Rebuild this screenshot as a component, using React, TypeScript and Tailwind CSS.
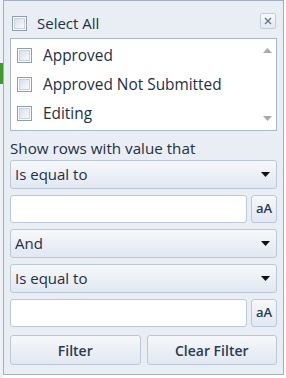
import React from 'react'

const font = { fontFamily: '"Open Sans", "Noto Sans", sans-serif' }

function Check() {
  return (
    <div className="w-[15px] h-[15px] border border-[#8f9db0] bg-white p-[1px] shrink-0">
      <div className="w-full h-full border border-[#c9d1dc] bg-gradient-to-br from-[#d9e0e9] to-[#f7f9fb]" />
    </div>
  )
}

function Arrow() {
  return (
    <svg width="9" height="5" viewBox="0 0 9 5" className="shrink-0">
      <path d="M0 0 H9 L4.5 5 Z" fill="#111" />
    </svg>
  )
}

function Dropdown({ label }: { label: string }) {
  return (
    <div className="h-[29px] flex items-center justify-between pl-[4px] pr-[6px] rounded-[3px] border border-[#bac8da] bg-gradient-to-b from-[#f6f8fb] to-[#e1e8f1] text-[15px] text-[#1f2f44]">
      <span>{label}</span>
      <Arrow />
    </div>
  )
}

function TextRow() {
  return (
    <div className="flex gap-[4px] h-[28px]">
      <div className="flex-1 rounded-[3px] border border-[#bac8da] bg-white" />
      <div className="w-[26px] rounded-[3px] border border-[#bac8da] bg-gradient-to-b from-[#f6f8fb] to-[#e1e8f1] flex items-center justify-center text-[13px] font-semibold text-[#2a3b51]">
        aA
      </div>
    </div>
  )
}

export default function App() {
  const items = ['Approved', 'Approved Not Submitted', 'Editing']
  return (
    <div className="w-[286px] h-[378px] flex bg-white overflow-hidden" style={font}>
      {/* strip of the grid behind the popup */}
      <div className="w-[3px] h-full flex flex-col bg-[#eef2f6]">
        <div className="h-[63px]" />
        <div className="h-[21px] bg-[#3f9a2e]" />
      </div>

      <div className="w-[281px] h-[375px] border border-[#a3afbf] bg-[#e9eef5] px-[6px] flex flex-col">
        {/* header */}
        <div className="h-[37px] flex items-center justify-between pt-[8px] pl-[2px] pr-[1px]">
          <div className="flex items-center gap-[10px] text-[15px] text-[#1f2f44]">
            <Check />
            <span>Select All</span>
          </div>
          <div className="w-[16px] h-[16px] -mt-[6px] rounded-[2px] border border-[#c3cdd9] bg-gradient-to-b from-[#f7f9fc] to-[#e3e9f1] flex items-center justify-center">
            <svg width="8" height="8" viewBox="0 0 8 8">
              <path d="M1 1 L7 7 M7 1 L1 7" stroke="#6b7684" strokeWidth="1.4" />
            </svg>
          </div>
        </div>

        {/* list */}
        <div className="h-[93px] border border-[#a9b7c8] bg-white flex">
          <div className="flex-1 flex flex-col pt-[2px] pl-[6px]">
            {items.map(t => (
              <div key={t} className="h-[29px] flex items-center gap-[11px] text-[15.4px] text-[#1f2f44]">
                <Check />
                <span>{t}</span>
              </div>
            ))}
          </div>
          <div className="w-[17px] flex flex-col items-center justify-between py-[9px]">
            <svg width="9" height="5" viewBox="0 0 9 5">
              <path d="M0 5 H9 L4.5 0 Z" fill="#a3aab3" />
            </svg>
            <svg width="9" height="5" viewBox="0 0 9 5">
              <path d="M0 0 H9 L4.5 5 Z" fill="#a3aab3" />
            </svg>
          </div>
        </div>

        <div className="h-[29px] flex items-center text-[15.2px] text-[#1f2f44] pt-[6px]">Show rows with value that</div>

        <div className="flex flex-col gap-[6px]">
          <Dropdown label="Is equal to" />
          <TextRow />
          <Dropdown label="And" />
          <Dropdown label="Is equal to" />
          <TextRow />
        </div>

        <div className="flex gap-[6px] mt-[8px]">
          <div className="flex-1 h-[30px] rounded-[3px] border border-[#bac8da] bg-gradient-to-b from-[#f6f8fb] to-[#e1e8f1] flex items-center justify-center text-[14px] font-semibold text-[#2a3b51]">
            Filter
          </div>
          <div className="flex-1 h-[30px] rounded-[3px] border border-[#bac8da] bg-gradient-to-b from-[#f6f8fb] to-[#e1e8f1] flex items-center justify-center text-[14px] font-semibold text-[#2a3b51]">
            Clear Filter
          </div>
        </div>
      </div>
    </div>
  )
}
